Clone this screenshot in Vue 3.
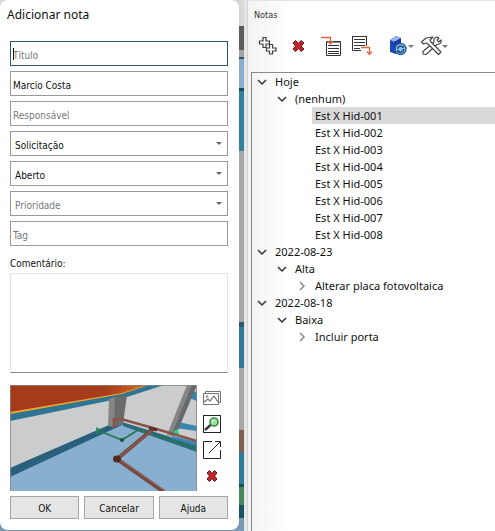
<script setup>
import { ref } from 'vue'

const title = ref('')
const author = ref('Marcio Costa')
const owner = ref('')
const tag = ref('')
const comment = ref('')
const type = ref('Solicitação')
const status = ref('Aberto')
const priority = ref('')

const selected = ref(2)
const rows = [
  { level: 1, text: 'Hoje', state: 'open' },
  { level: 2, text: '(nenhum)', state: 'open' },
  ...[1, 2, 3, 4, 5, 6, 7, 8].map((n) => ({ level: 3, text: `Est X Hid-00${n}`, state: 'leaf' })),
  { level: 1, text: '2022-08-23', state: 'open' },
  { level: 2, text: 'Alta', state: 'open' },
  { level: 3, text: 'Alterar placa fotovoltaica', state: 'closed' },
  { level: 1, text: '2022-08-18', state: 'open' },
  { level: 2, text: 'Baixa', state: 'open' },
  { level: 3, text: 'Incluir porta', state: 'closed' },
]
</script>

<template>
  <div class="workspace">
    <form class="dialog" @submit.prevent>
      <h1>Adicionar nota</h1>
      <div class="fields">
        <div class="field active"><input v-model="title" type="text" placeholder="Título" aria-label="Título" /></div>
        <div class="field"><input v-model="author" type="text" aria-label="Autor" /></div>
        <div class="field"><input v-model="owner" type="text" placeholder="Responsável" aria-label="Responsável" /></div>
        <div class="field drop">
          <select v-model="type" aria-label="Tipo"><option>Solicitação</option></select>
        </div>
        <div class="field drop">
          <select v-model="status" aria-label="Estado"><option>Aberto</option></select>
        </div>
        <div class="field drop">
          <select v-model="priority" :class="{ empty: !priority }" aria-label="Prioridade">
            <option value="" disabled>Prioridade</option>
            <option>Alta</option>
            <option>Baixa</option>
          </select>
        </div>
        <div class="field"><input v-model="tag" type="text" placeholder="Tag" aria-label="Tag" /></div>
      </div>
      <label class="caption" for="comment">Comentário:</label>
      <textarea id="comment" v-model="comment"></textarea>

      <div class="snapshot">
        <svg class="scene" viewBox="0 0 187 106" preserveAspectRatio="none" aria-hidden="true">
          <defs>
            <linearGradient id="ceiling" x1="0" x2="1">
              <stop offset="0" stop-color="#a53a1c" />
              <stop offset=".7" stop-color="#a83c1b" />
              <stop offset="1" stop-color="#d66a27" />
            </linearGradient>
          </defs>
          <rect width="187" height="106" fill="#cbcccd" />
          <path d="M0 90 L99 43 L113 38 L187 64 V106 H0Z" fill="#88afd0" />
          <path d="M0 83 L99 40 L112 37 V40 L99 46 L0 92Z" fill="#29617c" />
          <path d="M112 37 L187 60 V67 L113 41Z" fill="#2a6a82" />
          <path d="M0 28 L112 8 L136 0 H154 L117 12 L0 36Z" fill="#2f7593" />
          <path d="M0 0 H139 L112 9 L0 29Z" fill="#f4a52b" />
          <path d="M0 0 H137 L112 8 L0 27Z" fill="url(#ceiling)" />
          <path d="M99 14 L106 12 L104 42 L98 41Z" fill="#858585" />
          <path d="M105 12 L117 10 L113 39 L104 42Z" fill="#696b6d" />
          <path d="M181 6 L187 7 V16 L179 13Z M168 37 L187 41 V46 L165 43Z M163 51 L187 57 V61 L160 53Z" fill="#3987ac" />
          <path d="M177 0 H183 L163 51 L157 50Z" fill="#858585" />
          <path d="M182 0 H187 L166 50 L161 51Z" fill="#666a6d" />
          <path d="M164 46 L168 44 L169 49 L163 49Z" fill="#25d18e" />
          <path d="M87 45 L112 55 L128 45 L187 64" fill="none" stroke="#28764f" stroke-width="1.6" />
          <path d="M86 42 L90 44 L87 51Z" fill="#218a57" />
          <circle cx="112" cy="55" r="2" fill="#1d5340" />
          <path d="M104 43 V34 H111 L143 43 L187 56" fill="none" stroke="#895347" stroke-width="2.6" />
          <path d="M143 44 L107 74 L154 107" fill="none" stroke="#754a42" stroke-width="4" />
          <path d="M144 44 L108 73" stroke="#9b6457" />
          <path d="M109 74 L155 106" stroke="#98655b" />
          <ellipse cx="107" cy="74" rx="4" ry="3.4" fill="#532822" />
          <path d="M139 43 L147 45" stroke="#57312a" stroke-width="3" />
          <path d="M.5 106 V.5 H186.5 V106" fill="none" stroke="#858585" stroke-width=".8" />
        </svg>
        <div class="tools">
          <button type="button" aria-label="Imagens">
            <svg viewBox="0 0 18 18" fill="none" stroke="#747474">
              <path d="M2.5 4.500V2.500H17.500V13.500H15.500M.5 4.500H15.500V15.500H.5Z" />
              <path d="M1 13 L5 10 L7 12 L11 7 L15 13" stroke-width="1.200" /><circle cx="4" cy="7.500" r=".8" />
            </svg>
          </button>
          <button type="button" aria-label="Ampliar">
            <svg viewBox="0 0 18 18" fill="none">
              <rect x=".5" y=".5" width="17" height="17" stroke="#242424" />
              <path d="M2 15 L7.500 10" stroke="#3a3a42" stroke-width="2.400" />
              <circle cx="11" cy="7" r="4" fill="#a4dfaa" stroke="#388c48" stroke-width="1.600" />
              <path d="M9 7 Q9.500 5 11.500 5" stroke="#e5f9e5" />
            </svg>
          </button>
          <button type="button" aria-label="Abrir em janela">
            <svg viewBox="0 0 18 18" fill="none" stroke="#242424">
              <path d="M9 .5H.5V17.500H17.500V9M12 .5H17.500V6M6 12L17 1" />
            </svg>
          </button>
          <button type="button" aria-label="Remover imagem">
            <svg viewBox="0 0 18 18"><path class="cross" d="M4 6L6.500 3.500L9 6.500L11.500 3.500L14 6L11.500 9L14 12L11.500 14.500L9 11.500L6.500 14.500L4 12L6.500 9Z" /></svg>
          </button>
        </div>
      </div>

      <div class="actions">
        <button type="submit">OK</button>
        <button type="button">Cancelar</button>
        <button type="button">Ajuda</button>
      </div>
    </form>

    <section class="panel">
      <h2>Notas</h2>
      <div class="toolbar">
        <div class="group">
          <button type="button" aria-label="Adicionar">
            <svg viewBox="0 0 24 24" fill="#fff" stroke="#3c3c3c" stroke-width="1.200">
              <path d="M7 3.500H10V7H13.500V10H10V13.500H7V10H3.500V7H7Z" />
              <path d="M13.500 10.500H16.500V14H20V17H16.500V20H13.500V17H10.500V14H13.500Z" />
            </svg>
          </button>
          <button type="button" aria-label="Excluir">
            <svg viewBox="0 0 24 24"><path class="cross" d="M7 9L9.500 6.500L12.500 9.500L15 6.500L18 9L15 12L18 15L15 17.500L12.500 14.500L9.500 17.500L7 15L9.500 12Z" /></svg>
          </button>
        </div>
        <div class="group">
          <button type="button" aria-label="Importar">
            <svg viewBox="0 0 24 24" fill="none">
              <path d="M7.500 7.500H21.500V21.500H7.500Z M7.500 8H21.500 M9 11.500H20M9 14.500H20M9 17.500H20M9 19.500H20" stroke="#333" />
              <path d="M2 3.500H11.500V9M9 7L11.500 10L14 7" stroke="#e16842" stroke-width="1.300" />
            </svg>
          </button>
          <button type="button" aria-label="Exportar">
            <svg viewBox="0 0 24 24" fill="none">
              <path d="M17.500 12V2.500H3.500V16.500H12 M5 5.500H16M5 8.500H16M5 11.500H16M5 14.500H11 M3 2.500H18" stroke="#333" />
              <path d="M12 13.500H20.500V20M18 17.500L20.500 20.500L23 17.500" stroke="#e16842" stroke-width="1.300" />
            </svg>
          </button>
        </div>
        <div class="group menus">
          <button class="menu" type="button" aria-label="Sincronizar modelo">
            <svg viewBox="0 0 24 24" fill="none">
              <path d="M4 6L10 2L15 4V9L10 10V20L4 18Z" fill="#2147bd" />
              <path d="M4 6L10 2L15 4L9 8Z" fill="#92b5f1" /><path d="M8 8L15 4V10L10 11V20L8 19Z" fill="#173aa5" />
              <circle cx="14.500" cy="15" r="5.500" fill="#8bbfe7" stroke="#245b9d" stroke-width="1.400" />
              <path d="M11.500 15A3 3 0 0 1 17 13.500M17.500 15A3 3 0 0 1 12 17" stroke="#164683" stroke-width="1.400" />
              <path d="M15.500 13.800H18V11.500Z M13.500 16.300H11V18.500Z" fill="#164683" />
            </svg>
          </button>
          <button class="menu" type="button" aria-label="Ferramentas">
            <svg viewBox="0 0 24 24" fill="#fff" stroke="#444" stroke-width="1.200" stroke-linejoin="round">
              <path d="M3 17.500L14 8Q13 4 17 3L19 4L17 6L18.500 8L21 6Q22 10 17 10.500L6 20.500L3 20Z" />
              <path d="M1.500 8L6 4L13 3L10 6L11 8L21 18L18.500 20.500L8.500 10.500L6 9L3.500 10Z" />
            </svg>
          </button>
        </div>
      </div>
      <ul class="tree" role="tree" aria-label="Notas">
        <li
          v-for="(row, i) in rows"
          :key="row.text"
          role="treeitem"
          :aria-level="row.level"
          :aria-selected="selected === i"
          :class="['row', 'level' + row.level]"
        >
          <span class="twisty">
            <svg v-if="row.state === 'open'" viewBox="0 0 10 10"><path d="M1 3L5 7L9 3" fill="none" stroke="#333" stroke-width="1.500" /></svg>
            <svg v-if="row.state === 'closed'" viewBox="0 0 10 10"><path d="M3 1L7 5L3 9" fill="none" stroke="#8a8a8a" stroke-width="1.500" /></svg>
          </span>
          <button type="button" class="item" :class="{ selected: selected === i }" @click="selected = i">{{ row.text }}</button>
        </li>
      </ul>
    </section>
  </div>
</template>

<style>
body {
  margin: 0;
}
</style>

<style scoped>
* {
  box-sizing: border-box;
}
.workspace {
  display: grid;
  grid-template-columns: 239fr 5px 251fr;
  min-height: 100vh;
  font-family: 'Noto Sans', sans-serif;
  font-size: 11px;
  color: #111;
  background: linear-gradient(
    #d8d8d8 0 26px, #5b5b5b 26px 50px, #a5a5a5 50px 57px, #245167 57px 59px, #86add0 59px 88px,
    #154c62 88px 91px, #347f9c 91px 151px, #a7a7a7 151px 322px, #285b70 322px 327px, #32799b 327px 368px,
    #a7a7a7 368px 430px, #80604f 430px 452px, #31799a 452px 484px, #1d4c5c 484px 487px, #45875e 487px 505px,
    #1c5268 505px 518px, #7899b3 518px
  );
}
button,
input,
select,
textarea {
  margin: 0;
  border-radius: 0;
  font: inherit;
  color: inherit;
}
.dialog {
  display: flex;
  flex-direction: column;
  min-width: 0;
  margin-bottom: 1px;
  padding: 5px 11px 11px 10px;
  background: #fff;
  border-radius: 8px;
  font-family: 'DejaVu Sans Condensed', 'Noto Sans', sans-serif;
  font-size: 10px;
}
h1 {
  margin: 0 -3px 16px;
  font-family: 'Noto Sans', sans-serif;
  font-size: 12px;
  line-height: 20px;
  font-weight: 400;
}
.fields {
  display: flex;
  flex-direction: column;
  gap: 5px;
}
.field {
  position: relative;
  height: 25px;
  border: 1px solid #999;
}
.field.active {
  border-color: #2b5673;
}
.field.active::before {
  content: '';
  position: absolute;
  left: 2px;
  top: 6px;
  width: 1px;
  height: 12px;
  background: #000;
}
.field input,
.field select {
  display: block;
  width: 100%;
  height: 100%;
  padding: 3px 2px 0;
  border: 0;
  outline: 0;
  background: transparent;
}
.field select {
  appearance: none;
  padding-left: 4px;
}
.field.drop::after {
  content: '';
  position: absolute;
  right: 5px;
  top: 10px;
  border: 3px solid transparent;
  border-top-color: #666;
  border-bottom: 0;
  pointer-events: none;
}
.field input::placeholder,
.field select.empty {
  color: #777;
  opacity: 1;
}
.caption {
  margin-top: 8px;
  line-height: 19px;
}
textarea {
  display: block;
  width: 100%;
  height: 100px;
  padding: 3px;
  resize: none;
  outline: 0;
  border: 1px solid #e3e3e3;
  border-bottom-color: #888;
}
.snapshot {
  display: flex;
  gap: 6px;
  margin-top: 12px;
  padding-right: 7px;
}
.scene {
  display: block;
  flex: 1;
  min-width: 0;
  height: 106px;
}
.tools {
  display: flex;
  flex-direction: column;
  gap: 8px;
  padding-top: 4px;
}
.tools button {
  width: 18px;
  height: 18px;
}
.tools button,
.toolbar button {
  padding: 0;
  border: 0;
  background: none;
}
.tools svg,
.toolbar svg,
.twisty svg {
  display: block;
}
.cross {
  fill: #c4232b;
  stroke: #64161b;
  stroke-width: 1;
}
.actions {
  display: flex;
  gap: 5px;
  margin-top: 5px;
}
.actions button {
  flex: 1;
  height: 23px;
  padding: 2px 0 0;
  border: 1px solid #a5a5a5;
  background: #e5e5e5;
}
.panel {
  grid-column: 3;
  display: flex;
  flex-direction: column;
  min-width: 0;
  padding-left: 7px;
  background: linear-gradient(90deg, #e5e5e5 0 3px, #d3d3d3 3px 4px, #f3f3f3 4px, #fff 50px);
  border-top: 1px solid #e4e4e4;
}
h2 {
  margin: 0;
  padding: 6px 3px 0;
  font-family: 'DejaVu Sans Condensed', 'Noto Sans', sans-serif;
  font-size: 9px;
  line-height: 16px;
  font-weight: 400;
  color: #333;
}
.toolbar {
  display: flex;
  gap: 9px;
  padding: 11px 5px 14px;
}
.group {
  display: flex;
  gap: 6px;
}
.menus {
  gap: 2px;
  padding-left: 4px;
}
.toolbar svg {
  width: 24px;
  height: 24px;
}
.toolbar .menu {
  display: flex;
  align-items: center;
  width: 32px;
}
.menu::after {
  content: '';
  margin-left: -2px;
  border: 3px solid transparent;
  border-top-color: #777;
  border-bottom: 0;
}
.tree {
  flex: 1;
  margin: 0;
  padding: 0;
  list-style: none;
  border: 1px solid #888;
  border-right: 0;
  border-bottom: 0;
}
.row {
  display: flex;
  align-items: center;
  height: 17px;
  padding-left: 5px;
}
.level2 {
  padding-left: 25px;
}
.level3 {
  padding-left: 45px;
}
.twisty {
  flex: none;
  width: 15px;
}
.twisty svg {
  width: 10px;
  height: 10px;
}
.item {
  flex: 1;
  height: 17px;
  padding: 0 3px;
  border: 0;
  background: none;
  line-height: 17px;
  text-align: left;
  white-space: nowrap;
}
.item.selected {
  background: #d9d9d9;
}
</style>
